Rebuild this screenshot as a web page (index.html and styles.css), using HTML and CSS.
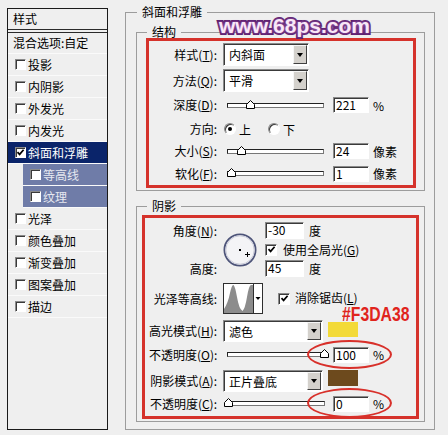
FILE: index.html
```html
<!DOCTYPE html>
<html lang="zh">
<head>
<meta charset="utf-8">
<title>斜面和浮雕</title>
<link rel="stylesheet" href="styles.css">
</head>
<body>
<aside class="styles-panel">
  <div class="panel-head">样式</div>
  <ul class="style-list">
    <li class="item item-plain">混合选项:自定</li>
    <li class="item"><span class="cb"></span>投影</li>
    <li class="item"><span class="cb"></span>内阴影</li>
    <li class="item"><span class="cb"></span>外发光</li>
    <li class="item"><span class="cb"></span>内发光</li>
    <li class="item item-selected"><span class="cb"><svg class="tick" viewBox="0 0 9 9"><path d="M1.5 4.2 L3.6 6.4 L7.6 1.8" /></svg></span>斜面和浮雕</li>
    <li class="item item-sub"><span class="cb"></span>等高线</li>
    <li class="item item-sub"><span class="cb"></span>纹理</li>
    <li class="item"><span class="cb"></span>光泽</li>
    <li class="item"><span class="cb"></span>颜色叠加</li>
    <li class="item"><span class="cb"></span>渐变叠加</li>
    <li class="item"><span class="cb"></span>图案叠加</li>
    <li class="item"><span class="cb"></span>描边</li>
  </ul>
</aside>

<main class="main">
  <fieldset class="group group-outer">
    <legend>斜面和浮雕</legend>

    <fieldset class="group group-inner group-structure">
      <legend>结构</legend>
      <div class="redbox redbox-structure">
        <div class="row h23">
          <span class="lbl">样式(<u>T</u>):</span>
          <div class="dd"><span class="dd-text">内斜面</span><span class="dd-btn"></span></div>
        </div>
        <div class="row h23">
          <span class="lbl">方法(<u>Q</u>):</span>
          <div class="dd"><span class="dd-text">平滑</span><span class="dd-btn"></span></div>
        </div>
        <div class="row h20">
          <span class="lbl">深度(<u>D</u>):</span>
          <div class="slider"><svg class="thumb" style="left:18px" viewBox="0 0 9 9"><polygon points="0.5,8.5 0.5,4.5 4.5,0.5 8.5,4.5 8.5,8.5"/></svg></div>
          <span class="num">221</span><span class="unit">%</span>
        </div>
        <div class="row h22">
          <span class="lbl">方向:</span>
          <span class="radio radio-on"></span><span class="radio-text">上</span>
          <span class="radio radio-gap"></span><span class="radio-text">下</span>
        </div>
        <div class="row h16">
          <span class="lbl">大小(<u>S</u>):</span>
          <div class="slider"><svg class="thumb" style="left:9px" viewBox="0 0 9 9"><polygon points="0.5,8.5 0.5,4.5 4.5,0.5 8.5,4.5 8.5,8.5"/></svg></div>
          <span class="num">24</span><span class="unit">像素</span>
        </div>
        <div class="row h23">
          <span class="lbl">软化(<u>F</u>):</span>
          <div class="slider"><svg class="thumb" style="left:-1px" viewBox="0 0 9 9"><polygon points="0.5,8.5 0.5,4.5 4.5,0.5 8.5,4.5 8.5,8.5"/></svg></div>
          <span class="num">1</span><span class="unit">像素</span>
        </div>
      </div>
    </fieldset>

    <fieldset class="group group-inner group-shade">
      <legend>阴影</legend>
      <div class="redbox redbox-shade">
        <div class="angle">
          <span class="lbl a-lbl1">角度(<u>N</u>):</span>
          <svg class="dial" viewBox="0 0 34 34">
            <circle cx="17" cy="17" r="15.6" fill="#f4f4f6" stroke="#4d5479" stroke-width="1.8"/>
            <circle cx="17" cy="17" r="14.2" fill="none" stroke="#c9cbd9" stroke-width="1"/>
            <rect x="16" y="16" width="2" height="2" fill="#000"/>
            <path d="M22 21.5h5M24.5 19v5" stroke="#000" stroke-width="1" fill="none"/>
          </svg>
          <div class="a-f1"><span class="num num-angle">-30</span><span class="unit unit-deg">度</span></div>
          <div class="a-f2"><span class="cb cb-lg"><svg class="tick" viewBox="0 0 9 9"><path d="M1.5 4.2 L3.6 6.4 L7.6 1.8" /></svg></span><span class="cb-text">使用全局光(<u>G</u>)</span></div>
          <span class="lbl a-lbl3">高度:</span>
          <div class="a-f3"><span class="num num-angle">45</span><span class="unit unit-deg">度</span></div>
        </div>

        <div class="row h31 mb6">
          <span class="lbl">光泽等高线:</span>
          <svg class="contour" viewBox="0 0 40 31">
            <rect x="0.5" y="0.5" width="39" height="30" fill="#fff" stroke="#2e2e2e"/>
            <path d="M1 30 L1 26 Q5 20 7 10 Q9 1 10.5 2 Q12 3 14 14 Q16 26 19.5 28 Q22 26 24 14 Q26 2 28 2 L30 2 L30 30 Z" fill="#8c8c8c"/>
            <line x1="30.5" y1="1" x2="30.5" y2="30" stroke="#2e2e2e"/>
            <path d="M32.5 14 h5 l-2.5 3 z" fill="#000"/>
          </svg>
          <span class="cb cb-lg cb-aa"><svg class="tick" viewBox="0 0 9 9"><path d="M1.5 4.2 L3.6 6.4 L7.6 1.8" /></svg></span><span class="cb-text cb-text-aa">消除锯齿(<u>L</u>)</span>
        </div>

        <div class="row h22 mb4">
          <span class="lbl">高光模式(<u>H</u>):</span>
          <div class="dd dd-wide"><span class="dd-text">滤色</span><span class="dd-btn"></span></div>
          <span class="swatch swatch-yellow"></span>
        </div>
        <div class="row h17 mb7">
          <span class="lbl">不透明度(<u>O</u>):</span>
          <div class="slider slider-wide"><svg class="thumb" style="left:92px" viewBox="0 0 9 9"><polygon points="0.5,8.5 0.5,4.5 4.5,0.5 8.5,4.5 8.5,8.5"/></svg></div>
          <span class="num num-wide">100</span><span class="unit">%</span>
        </div>
        <div class="row h22 mb3">
          <span class="lbl">阴影模式(<u>A</u>):</span>
          <div class="dd dd-wide"><span class="dd-text">正片叠底</span><span class="dd-btn"></span></div>
          <span class="swatch swatch-brown"></span>
        </div>
        <div class="row h17">
          <span class="lbl">不透明度(<u>C</u>):</span>
          <div class="slider slider-wide"><svg class="thumb" style="left:-4px" viewBox="0 0 9 9"><polygon points="0.5,8.5 0.5,4.5 4.5,0.5 8.5,4.5 8.5,8.5"/></svg></div>
          <span class="num num-wide">0</span><span class="unit">%</span>
        </div>

        <span class="annot">#F3DA38</span>
        <span class="ring ring-1"></span>
        <span class="ring ring-2"></span>
      </div>
    </fieldset>
  </fieldset>
</main>

<div class="watermark">www.68ps.com</div>
</body>
</html>
```

FILE: styles.css
```css
* { box-sizing: border-box; }

html, body { margin: 0; padding: 0; }

body {
  width: 448px;
  height: 435px;
  overflow: hidden;
  position: relative;
  background: #efefef;
  color: #000;
  font-family: "Noto Sans CJK SC", "Noto Sans", sans-serif;
  font-size: 12px;
  display: flex;
  align-items: flex-start;
}

/* ---------- left styles list ---------- */
.styles-panel {
  margin: 8px 0 0 7px;
  width: 101px;
  height: 422px;
  border: 1px solid #1a1a1a;
  flex: none;
}

.panel-head {
  height: 21px;
  line-height: 20px;
  padding-left: 5px;
  border-bottom: 1px solid #2a2a2a;
}

.style-list {
  list-style: none;
  margin: 2px 0 0;
  padding: 0;
  border-top: 1px solid #2a2a2a;
}

.item {
  height: 22px;
  display: flex;
  align-items: center;
  padding-left: 7px;
  border-bottom: 1px solid #fafafa;
  line-height: 20px;
  white-space: nowrap;
}

.item-plain {
  height: 21px;
  padding-left: 5px;
}

.item .cb { margin-right: 2px; }

.item-selected {
  background: #0a246a;
  color: #fff;
}

.item-sub {
  margin-left: 15px;
  background: #6f7ca8;
  color: #e6e8f0;
}

/* ---------- check box ---------- */
.cb {
  width: 11px;
  height: 11px;
  flex: none;
  background: #fff;
  border: 1px solid;
  border-color: #8a8a8a #fff #fff #8a8a8a;
  box-shadow: inset 1px 1px 0 #3a3a3a;
  display: flex;
  align-items: center;
  justify-content: center;
}

.cb-lg { width: 12px; height: 12px; }

.tick {
  width: 9px;
  height: 9px;
  fill: none;
  stroke: #000;
  stroke-width: 1.7;
}

.cb-text { margin-left: 6px; white-space: nowrap; line-height: 14px; }

/* ---------- right side groups ---------- */
.main {
  margin: 5px 0 0 17px;
  flex: none;
}

.group {
  margin: 0;
  padding: 0;
  min-width: 0;
  border: 1px solid #9c9c9c;
}

.group > legend {
  padding: 0 5px;
  margin-left: 10px;
  line-height: 14px;
  font-size: 12px;
}

.group-outer {
  width: 310px;
  padding-bottom: 7px;
}

.group-outer > legend { margin-left: 11px; }

.group-inner {
  width: 289px;
  margin-left: 10px;
  padding-bottom: 2px;
}

.group-structure { margin-top: 6px; }

.group-shade { margin-top: 8px; }

.redbox {
  position: relative;
  border: 3px solid #d5322b;
  display: flex;
  flex-direction: column;
}

.redbox-structure {
  margin: -1px 0 0 9px;
  width: 270px;
  padding-top: 2px;
  gap: 3px;
}

.redbox-shade {
  margin: 2px 0 0 5px;
  width: 277px;
  padding: 4px 0 4px 4px;
}

/* ---------- rows ---------- */
.row {
  display: flex;
  align-items: center;
  flex: none;
}

.h16 { height: 16px; }
.h17 { height: 17px; }
.h20 { height: 20px; }
.h22 { height: 22px; }
.h23 { height: 23px; }
.h31 { height: 31px; }
.mb3 { margin-bottom: 3px; }
.mb4 { margin-bottom: 4px; }
.mb6 { margin-bottom: 6px; }
.mb7 { margin-bottom: 7px; }

.lbl {
  width: 68px;
  margin-right: 6px;
  text-align: right;
  white-space: nowrap;
  line-height: 14px;
  flex: none;
}

u { text-decoration: underline; text-underline-offset: 1px; }

/* dropdown */
.dd {
  align-self: stretch;
  width: 86px;
  display: flex;
  background: #fff;
  border: 1px solid;
  border-color: #8a8a8a #fff #fff #8a8a8a;
  box-shadow: inset 1px 1px 0 #3a3a3a;
  padding: 1px;
  flex: none;
}

.dd-wide { width: 100px; }

.dd-text {
  flex: 1;
  padding-left: 4px;
  display: flex;
  align-items: center;
  white-space: nowrap;
}

.dd-btn {
  width: 14px;
  background: #d4d1cc;
  border: 1px solid;
  border-color: #f6f6f6 #404040 #404040 #f6f6f6;
  display: flex;
  align-items: center;
  justify-content: center;
}

.dd-btn::after {
  content: "";
  border-left: 3.5px solid transparent;
  border-right: 3.5px solid transparent;
  border-top: 4px solid #000;
}

/* slider */
.slider {
  position: relative;
  width: 97px;
  height: 5px;
  margin-left: 4px;
  background: #fff;
  border: 1px solid #222;
  border-right-color: #777;
  border-bottom-color: #777;
  flex: none;
}

.slider-wide { width: 98px; }

.thumb {
  position: absolute;
  top: -4px;
  width: 9px;
  height: 9px;
  fill: #fff;
  stroke: #000;
  stroke-width: 1;
}

/* number field */
.num {
  width: 36px;
  height: 16px;
  margin-left: 9px;
  padding-left: 2px;
  line-height: 14px;
  background: #fff;
  border: 1px solid;
  border-color: #8a8a8a #fff #fff #8a8a8a;
  box-shadow: inset 1px 1px 0 #3a3a3a;
  flex: none;
}

.num-wide { margin-left: 8px; }

.num-angle {
  width: 39px;
  height: 17px;
  margin-left: 0;
}

.unit { margin-left: 4px; white-space: nowrap; }
.unit-deg { margin-left: 5px; }

/* radio */
.radio {
  width: 12px;
  height: 12px;
  margin-left: 1px;
  border-radius: 50%;
  background: #fff;
  border: 1px solid;
  border-color: #8a8a8a #fff #fff #8a8a8a;
  box-shadow: inset 1px 1px 0 #3a3a3a;
  display: flex;
  align-items: center;
  justify-content: center;
  flex: none;
}

.radio-on::after {
  content: "";
  width: 4px;
  height: 4px;
  border-radius: 50%;
  background: #000;
}

.radio-gap { margin-left: 17px; }

.radio-text { margin-left: 3px; }

/* angle block */
.angle {
  display: grid;
  grid-template-columns: 74px 42px auto;
  grid-template-rows: 17px 21px 17px;
  align-items: center;
  margin-bottom: 6px;
}

.a-lbl1 { grid-column: 1; grid-row: 1; }
.a-lbl3 { grid-column: 1; grid-row: 3; }

.dial {
  grid-column: 2;
  grid-row: 1 / 4;
  width: 34px;
  height: 34px;
  align-self: center;
}

.a-f1, .a-f2, .a-f3 {
  grid-column: 3;
  display: flex;
  align-items: center;
}

.a-f1 { grid-row: 1; }
.a-f2 { grid-row: 2; }
.a-f3 { grid-row: 3; }

.contour {
  width: 40px;
  height: 31px;
  flex: none;
}

.cb-aa { margin-left: 15px; }
.cb-text-aa { margin-left: 5px; line-height: 12px; margin-top: -1px; }

/* colour swatches */
.swatch {
  width: 30px;
  margin-left: 5px;
  align-self: flex-start;
  flex: none;
}

.swatch-yellow { height: 15px; margin-top: 2px; background: #f3da38; }
.swatch-brown { height: 16px; background: #6d4a1d; }

/* annotations drawn over the dialog */
.annot {
  position: absolute;
  left: 197px;
  top: 88px;
  font-family: "Liberation Sans", Arial, sans-serif;
  font-weight: bold;
  font-size: 21px;
  line-height: 16px;
  color: #e0241c;
  transform: scaleX(0.75);
  transform-origin: 0 0;
  white-space: nowrap;
}

.ring {
  position: absolute;
  left: 162px;
  width: 85px;
  height: 29px;
  border: 2px solid #d8302a;
  border-radius: 50%;
}

.ring-1 { top: 122px; }
.ring-2 { top: 170px; height: 30px; }

.watermark {
  position: absolute;
  left: 219px;
  top: 15px;
  font-family: "Liberation Sans", Arial, sans-serif;
  font-weight: bold;
  font-size: 21px;
  line-height: 21px;
  color: #f9e8f7;
  -webkit-text-stroke: 4px #5a1c6c;
  paint-order: stroke fill;
  text-shadow: 0 0 3px #b27ac4;
  white-space: nowrap;
}
```
